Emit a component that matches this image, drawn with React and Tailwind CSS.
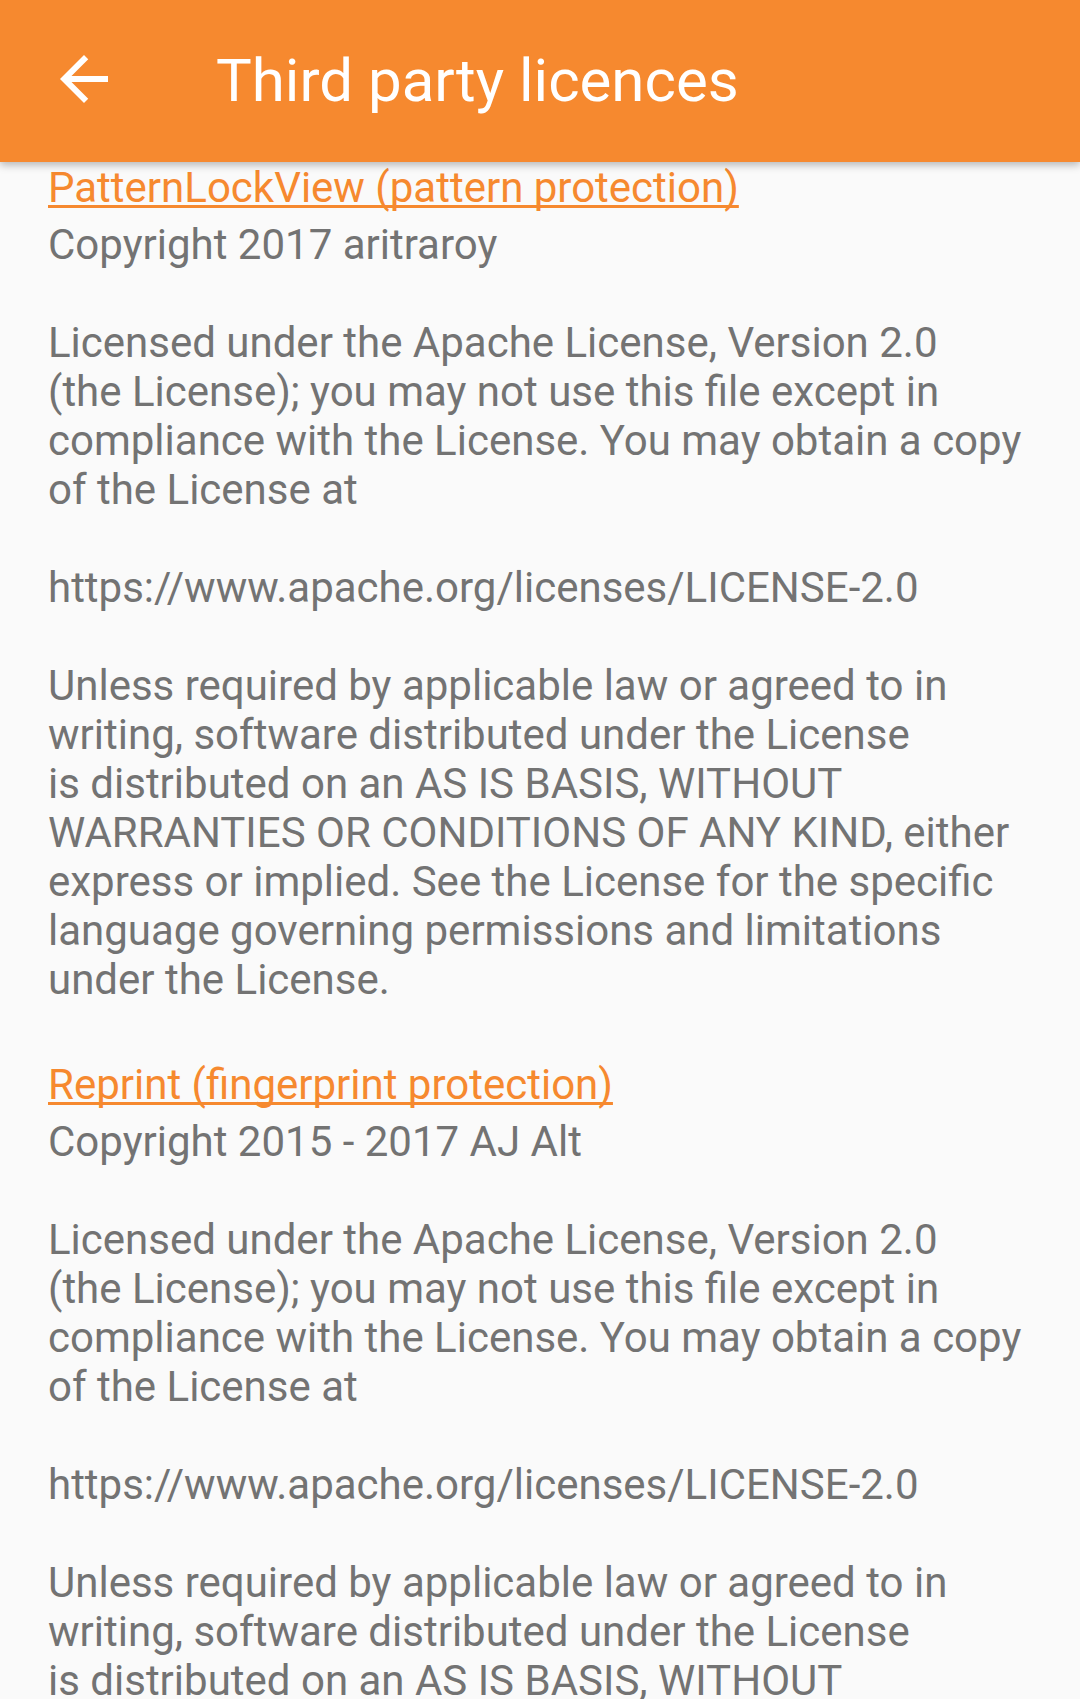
import React from "react";

const sections = [
  {
    title: "PatternLockView (pattern protection)",
    body: `Copyright 2017 aritraroy

Licensed under the Apache License, Version 2.0
(the License); you may not use this file except in
compliance with the License. You may obtain a copy
of the License at

https://www.apache.org/licenses/LICENSE-2.0

Unless required by applicable law or agreed to in
writing, software distributed under the License
is distributed on an AS IS BASIS, WITHOUT
WARRANTIES OR CONDITIONS OF ANY KIND, either
express or implied. See the License for the specific
language governing permissions and limitations
under the License.`,
  },
  {
    title: "Reprint (fingerprint protection)",
    body: `Copyright 2015 - 2017 AJ Alt

Licensed under the Apache License, Version 2.0
(the License); you may not use this file except in
compliance with the License. You may obtain a copy
of the License at

https://www.apache.org/licenses/LICENSE-2.0

Unless required by applicable law or agreed to in
writing, software distributed under the License
is distributed on an AS IS BASIS, WITHOUT
WARRANTIES OR CONDITIONS OF ANY KIND, either
express or implied. See the License for the specific
language governing permissions and limitations
under the License.`,
  },
];

export default function App() {
  return (
    <div className="w-[1080px] h-[1699px] overflow-hidden bg-[#fafafa] font-[Roboto,sans-serif]">
      <header className="relative z-10 flex h-[162px] items-center bg-[#f6892f] pl-[48px] shadow-[0_3px_8px_rgba(0,0,0,0.28)]">
        <svg
          width="72"
          height="72"
          viewBox="0 0 24 24"
          className="mb-[4px] shrink-0"
          fill="#ffffff"
        >
          <path d="M20 11H7.83l5.59-5.59L12 4l-8 8 8 8 1.41-1.41L7.83 13H20v-2z" />
        </svg>
        <h1 className="ml-[96px] text-[60px] leading-[70px] font-normal text-white">
          Third party licences
        </h1>
      </header>
      <main className="flex flex-col gap-[56px] px-[48px] pt-[1px]">
        {sections.map((s) => (
          <section key={s.title} className="flex flex-col gap-[8px]">
            <a
              href="#"
              className="self-start text-[42px] leading-[49px] text-[#f6892f] underline decoration-[3px] underline-offset-[3px] [text-decoration-skip-ink:none]"
            >
              {s.title}
            </a>
            <p className="whitespace-pre text-[42px] leading-[49px] text-[#737373]">
              {s.body}
            </p>
          </section>
        ))}
      </main>
    </div>
  );
}
